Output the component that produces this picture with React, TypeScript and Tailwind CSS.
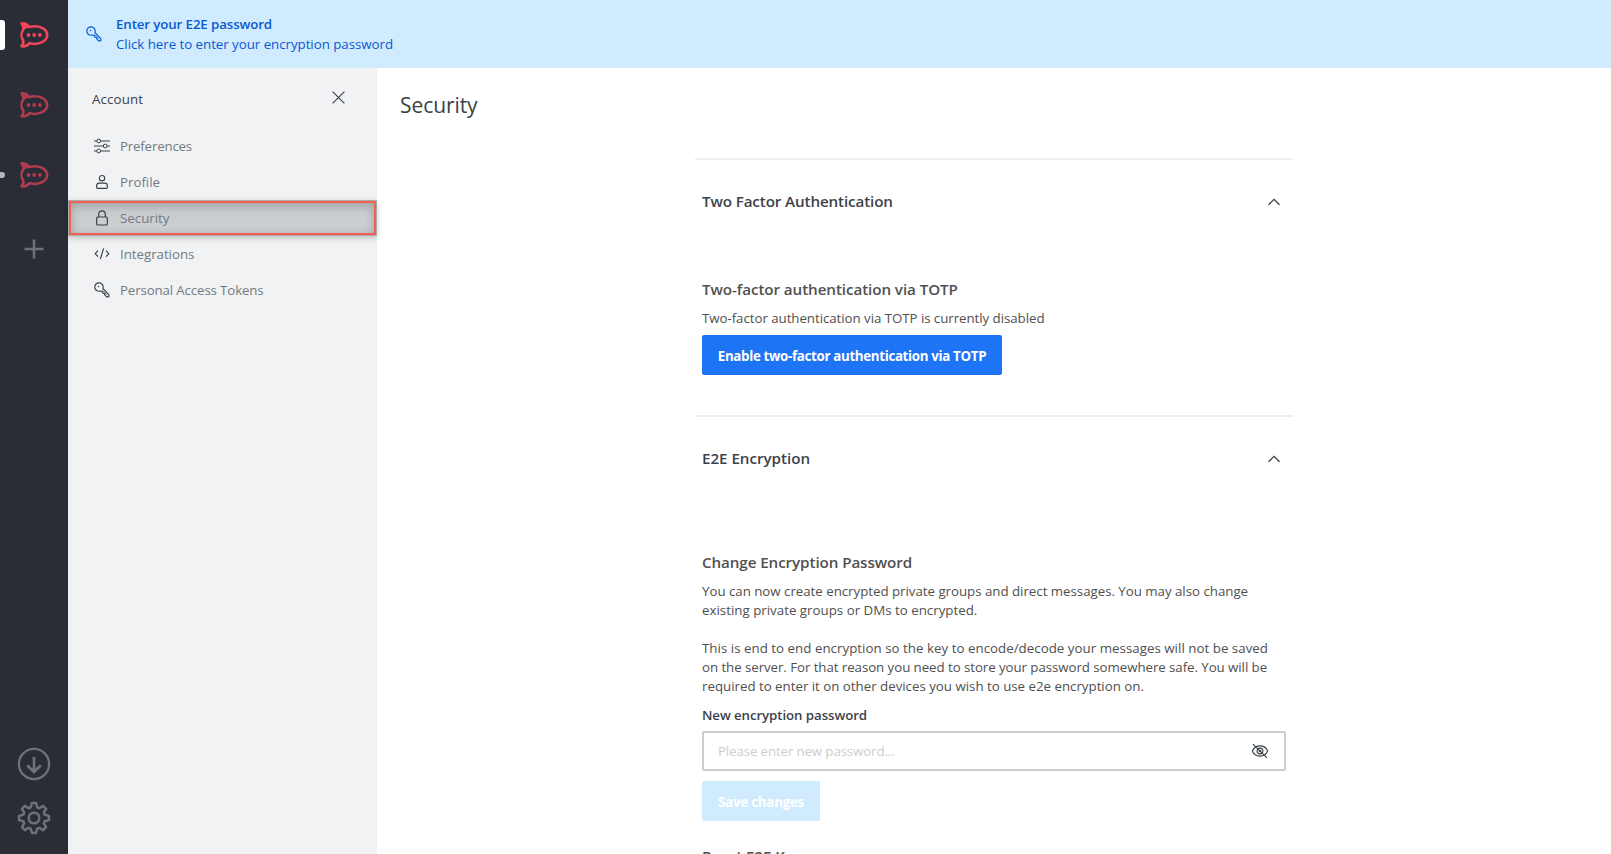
import type { ReactNode } from "react";

function RocketLogo({ className = "" }: { className?: string }) {
  return (
    <svg width="30" height="28" viewBox="-1 -1 30 28" fill="none" stroke="#f5455c" className={className}>
      <path
        d="M1.5 1.4C4.6 1 7.4 2.3 9 5C10.8 4.5 12.8 4.2 15 4.2C22 4.2 27.2 8.2 27.2 13C27.2 17.9 22 21.9 15 21.9C13 21.9 11.2 21.6 9.5 21.1C7.5 23.6 4.5 24.8 1.5 24.2C3.4 22.2 3.9 20 3 18C1 15.3 1 11 3 8C3.8 5.8 3.2 3.4 1.5 1.4Z"
        strokeWidth="2.5"
        strokeLinejoin="round"
      />
      <path d="M1.5 1.4C4.6 1 7.4 2.3 9 5C6.8 5.6 4.8 6.5 3 8C3.8 5.8 3.2 3.4 1.5 1.4Z" fill="#f5455c" />
      <g fill="#f5455c" stroke="none">
        <circle cx="8.5" cy="13" r="1.9" />
        <circle cx="14.2" cy="13" r="1.9" />
        <circle cx="19.8" cy="13" r="1.9" />
      </g>
    </svg>
  );
}

function KeyIcon() {
  return (
    <svg width="16" height="16" viewBox="0 0 16 16" fill="none" stroke="currentColor" strokeWidth="1.15" strokeLinejoin="round" className="shrink-0">
      <path d="M8.9 6.5A4.2 4.2 0 1 0 6.3 9L8.1 9.2L8.9 11.2L10.4 11.4L10.9 13.2L12.6 14.8H14.7L15 12.8Z" />
      <circle cx="4.4" cy="4.5" r=".8" fill="currentColor" stroke="none" />
      <path d="M8.6 8.4L13 12.9" strokeWidth=".7" />
    </svg>
  );
}

function SlidersIcon() {
  return (
    <svg width="16" height="16" viewBox="0 0 16 16" fill="none" stroke="currentColor" strokeWidth="1">
      <path d="M0 3H2.8M6.6 3H16M0 8H9.3M13.1 8H16M0 13H2.8M6.6 13H16" />
      <circle cx="4.7" cy="3" r="1.9" />
      <circle cx="11.2" cy="8" r="1.9" />
      <circle cx="4.7" cy="13" r="1.9" />
    </svg>
  );
}

function UserIcon() {
  return (
    <svg width="16" height="16" viewBox="0 0 16 16" fill="none" stroke="currentColor" strokeWidth="1.15">
      <circle cx="8" cy="4.2" r="2.7" />
      <path d="M5.3 9.1H10.7C12.4 9.1 13.4 10.3 13.4 12V13.3Q13.4 14.4 12.3 14.4H3.7Q2.6 14.4 2.6 13.3V12C2.6 10.3 3.6 9.1 5.3 9.1Z" />
    </svg>
  );
}

function LockIcon() {
  return (
    <svg width="16" height="16" viewBox="0 0 16 16" fill="none" stroke="currentColor" strokeWidth="1.2">
      <rect x="2.7" y="7" width="10.6" height="8" rx="1" />
      <path d="M4.7 7V4.2C4.7 2 6 .8 8 .8S11.3 2 11.3 4.2V7" />
    </svg>
  );
}

function CodeIcon() {
  return (
    <svg width="16" height="16" viewBox="0 0 16 16" fill="none" stroke="currentColor" strokeWidth="1.15">
      <path d="M4 4.7L1.2 7.7L4 10.7M12 4.7L14.8 7.7L12 10.7M9.6 2.4L6.4 13" />
    </svg>
  );
}

function ChevronUp() {
  return (
    <svg width="14" height="8" viewBox="0 0 14 8" fill="none" stroke="#3a3f48" strokeWidth="1.3" className="mt-px">
      <path d="M1.5 6.8L7 1.4L12.5 6.8" />
    </svg>
  );
}

function EyeOff() {
  return (
    <svg width="18" height="16" viewBox="0 0 18 16" fill="none" stroke="#3a3f48" strokeWidth="1.1">
      <path d="M1.4 8C2.7 4.8 5.4 2.9 9 2.9S15.3 4.8 16.6 8C15.3 11.2 12.6 13.1 9 13.1S2.7 11.2 1.4 8Z" />
      <circle cx="9" cy="8" r="2.9" />
      <circle cx="9" cy="8" r=".7" />
      <path d="M2 1.2L16 14.9" />
    </svg>
  );
}

function NavItem({ icon, label, tracking, active = false }: { icon: ReactNode; label: string; tracking: string; active?: boolean }) {
  return (
    <li
      className={
        active
          ? "relative z-10 flex h-9 items-center gap-[10px] border border-[#a9abae] bg-[#cbced1] pl-[25px] text-[#3a3f48] outline-2 -outline-offset-3 outline-[#f2604f] shadow-[inset_0_3px_9px_3px_rgba(0,0,0,0.2),0_2px_6px_rgba(0,0,0,0.22)]"
          : "flex h-9 items-center gap-[10px] pl-[26px] text-[#3a3f48]"
      }
    >
      {icon}
      <span className={"text-[13.3px] leading-5 text-[#747a82] " + tracking}>{label}</span>
    </li>
  );
}

function SectionHeader({ title, tracking }: { title: string; tracking: string }) {
  return (
    <div className="flex h-[82px] items-center justify-between pr-[5px]">
      <h2 className={"text-[15.2px] font-semibold leading-6 text-[#3d424b] " + tracking}>{title}</h2>
      <ChevronUp />
    </div>
  );
}

export default function App() {
  return (
    <div className="flex h-screen w-screen overflow-hidden bg-white font-['Open_Sans','Noto_Sans',sans-serif]">
      <aside className="flex w-[68px] shrink-0 flex-col justify-between bg-[#2a2d36] pb-[9px]">
        <div>
          <div className="relative flex h-[70px] items-center justify-center">
            <span className="absolute left-0 top-5 h-[30px] w-[5px] rounded-r-[3px] bg-white" />
            <RocketLogo />
          </div>
          <div className="flex h-[70px] items-center justify-center">
            <RocketLogo className="opacity-65" />
          </div>
          <div className="relative flex h-[70px] items-center justify-center">
            <span className="absolute left-0 top-8 h-[6px] w-[5px] rounded-r-[3px] bg-[#b4b5b8]" />
            <RocketLogo className="opacity-65" />
          </div>
          <div className="flex h-[76px] items-center justify-center">
            <svg width="20" height="20" viewBox="0 0 20 20" stroke="#6c727a" strokeWidth="2.6" className="mt-px">
              <path d="M10 .5V19.5M.5 10H19.5" />
            </svg>
          </div>
        </div>
        <div>
          <div className="flex h-[54px] items-center justify-center">
            <svg width="34" height="34" viewBox="0 0 34 34" fill="none" stroke="#6c727a" strokeWidth="2.3">
              <circle cx="17" cy="17" r="15.1" />
              <path d="M17 9.8V25M10.2 18.2L17 25L23.8 18.2" strokeWidth="2.7" />
            </svg>
          </div>
          <div className="flex h-[54px] items-center justify-center">
            <svg width="34" height="34" viewBox="0 0 34 34" fill="none" stroke="#6c727a" strokeWidth="2.5" strokeLinejoin="round">
              <circle cx="17" cy="17" r="5.3" />
              <path d="M14.9 2H19.1L20.2 6.3L22.3 7.2L26.1 4.9L29.1 7.9L26.8 11.7L27.7 13.8L32 14.9V19.1L27.7 20.2L26.8 22.3L29.1 26.1L26.1 29.1L22.3 26.8L20.2 27.7L19.1 32H14.9L13.8 27.7L11.7 26.8L7.9 29.1L4.9 26.1L7.2 22.3L6.3 20.2L2 19.1V14.9L6.3 13.8L7.2 11.7L4.9 7.9L7.9 4.9L11.7 7.2L13.8 6.3Z" />
            </svg>
          </div>
        </div>
      </aside>

      <div className="flex min-w-0 flex-1 flex-col">
        <header className="flex h-[68px] shrink-0 items-center gap-[14px] bg-[#d1ebfe] pl-[18px] text-[#095ad2]">
          <KeyIcon />
          <div className="text-[13.3px] leading-5">
            <div className="font-semibold tracking-[-0.116px]">Enter your E2E password</div>
            <div className="tracking-[-0.034px]">Click here to enter your encryption password</div>
          </div>
        </header>

        <div className="flex min-h-0 flex-1">
          <nav className="w-[309px] shrink-0 bg-[#f1f2f4]">
            <div className="flex h-[60px] items-center justify-between pl-6 pr-8 pt-[2px]">
              <span className="text-[13.3px] leading-5 tracking-[0.12px] text-[#3d424b]">Account</span>
              <svg width="13" height="13" viewBox="0 0 13 13" stroke="#3a3f48" strokeWidth="1.1" className="-mt-[3px]">
                <path d="M.6 .6L12.4 12.4M12.4 .6L.6 12.4" />
              </svg>
            </div>
            <ul>
              <NavItem icon={<SlidersIcon />} label="Preferences" tracking="tracking-[-0.188px]" />
              <NavItem icon={<UserIcon />} label="Profile" tracking="tracking-[-0.012px]" />
              <NavItem icon={<LockIcon />} label="Security" tracking="tracking-[0px]" active />
              <NavItem icon={<CodeIcon />} label="Integrations" tracking="tracking-[-0.03px]" />
              <NavItem icon={<KeyIcon />} label="Personal Access Tokens" tracking="tracking-[-0.14px]" />
            </ul>
          </nav>

          <main className="min-w-0 flex-1 overflow-hidden">
            <div className="flex h-[90px] items-start pl-[23px] pt-[22px]">
              <h1 className="text-[21px] leading-[30px] tracking-[-0.079px] text-[#3a3f48]">Security</h1>
            </div>
            <div className="mx-auto w-[598px]">
              <section className="h-[257px] border-t-2 border-[#eeeff1] px-[7px]">
                <SectionHeader title="Two Factor Authentication" tracking="tracking-[-0.12px]" />
                <h3 className="mt-[35px] text-[15.2px] font-semibold leading-6 tracking-[-0.08px] text-[#505050]">
                  Two-factor authentication via TOTP
                </h3>
                <p className="mt-[7px] text-[13.3px] leading-5 tracking-[-0.051px] text-[#505050]">
                  Two-factor authentication via TOTP is currently disabled
                </p>
                <button className="mt-[7px] block h-10 w-[300px] whitespace-nowrap rounded-[2px] bg-[#1d74f5] pt-px text-[13.3px] font-bold leading-5 tracking-[-0.32px] text-white">
                  Enable two-factor authentication via TOTP
                </button>
              </section>
              <section className="border-t-2 border-[#eeeff1] px-[7px]">
                <SectionHeader title="E2E Encryption" tracking="tracking-[-0.039px]" />
                <h3 className="mt-[51px] text-[15.2px] font-semibold leading-6 tracking-[-0.09px] text-[#505050]">
                  Change Encryption Password
                </h3>
                <div className="mt-2 whitespace-nowrap text-[13.3px] leading-[19px] text-[#505050]">
                  <p className="tracking-[-0.024px]">
                    You can now create encrypted private groups and direct messages. You may also change
                    <br />
                    <span className="tracking-[0.01px]">existing private groups or DMs to encrypted.</span>
                  </p>
                  <p className="mt-[19px]">
                    <span className="tracking-[0.029px]">
                      This is end to end encryption so the key to encode/decode your messages will not be saved
                    </span>
                    <br />
                    <span className="tracking-[-0.065px]">
                      on the server. For that reason you need to store your password somewhere safe. You will be
                    </span>
                    <br />
                    <span className="tracking-[-0.01px]">
                      required to enter it on other devices you wish to use e2e encryption on.
                    </span>
                  </p>
                </div>
                <label className="mt-[9px] block text-[13.3px] font-semibold leading-5 tracking-[-0.092px] text-[#3d424b]">
                  New encryption password
                </label>
                <div className="mt-[6px] flex h-10 w-[584px] items-center justify-between rounded-[2px] border-2 border-[#cbced1] pl-[14px] pr-[15px]">
                  <span className="text-[13.3px] leading-5 tracking-[-0.129px] text-[#cbced1]">
                    Please enter new password...
                  </span>
                  <EyeOff />
                </div>
                <button className="mt-[10px] block h-10 w-[118px] rounded-[2px] bg-[#d1ebfe] pt-px text-[13.3px] font-bold leading-5 tracking-[-0.213px] text-white">
                  Save changes
                </button>
                <h3 className="mt-[23px] text-[15.2px] font-semibold leading-6 tracking-[-0.1px] text-[#505050]">
                  Reset E2E Key
                </h3>
              </section>
            </div>
          </main>
        </div>
      </div>
    </div>
  );
}
